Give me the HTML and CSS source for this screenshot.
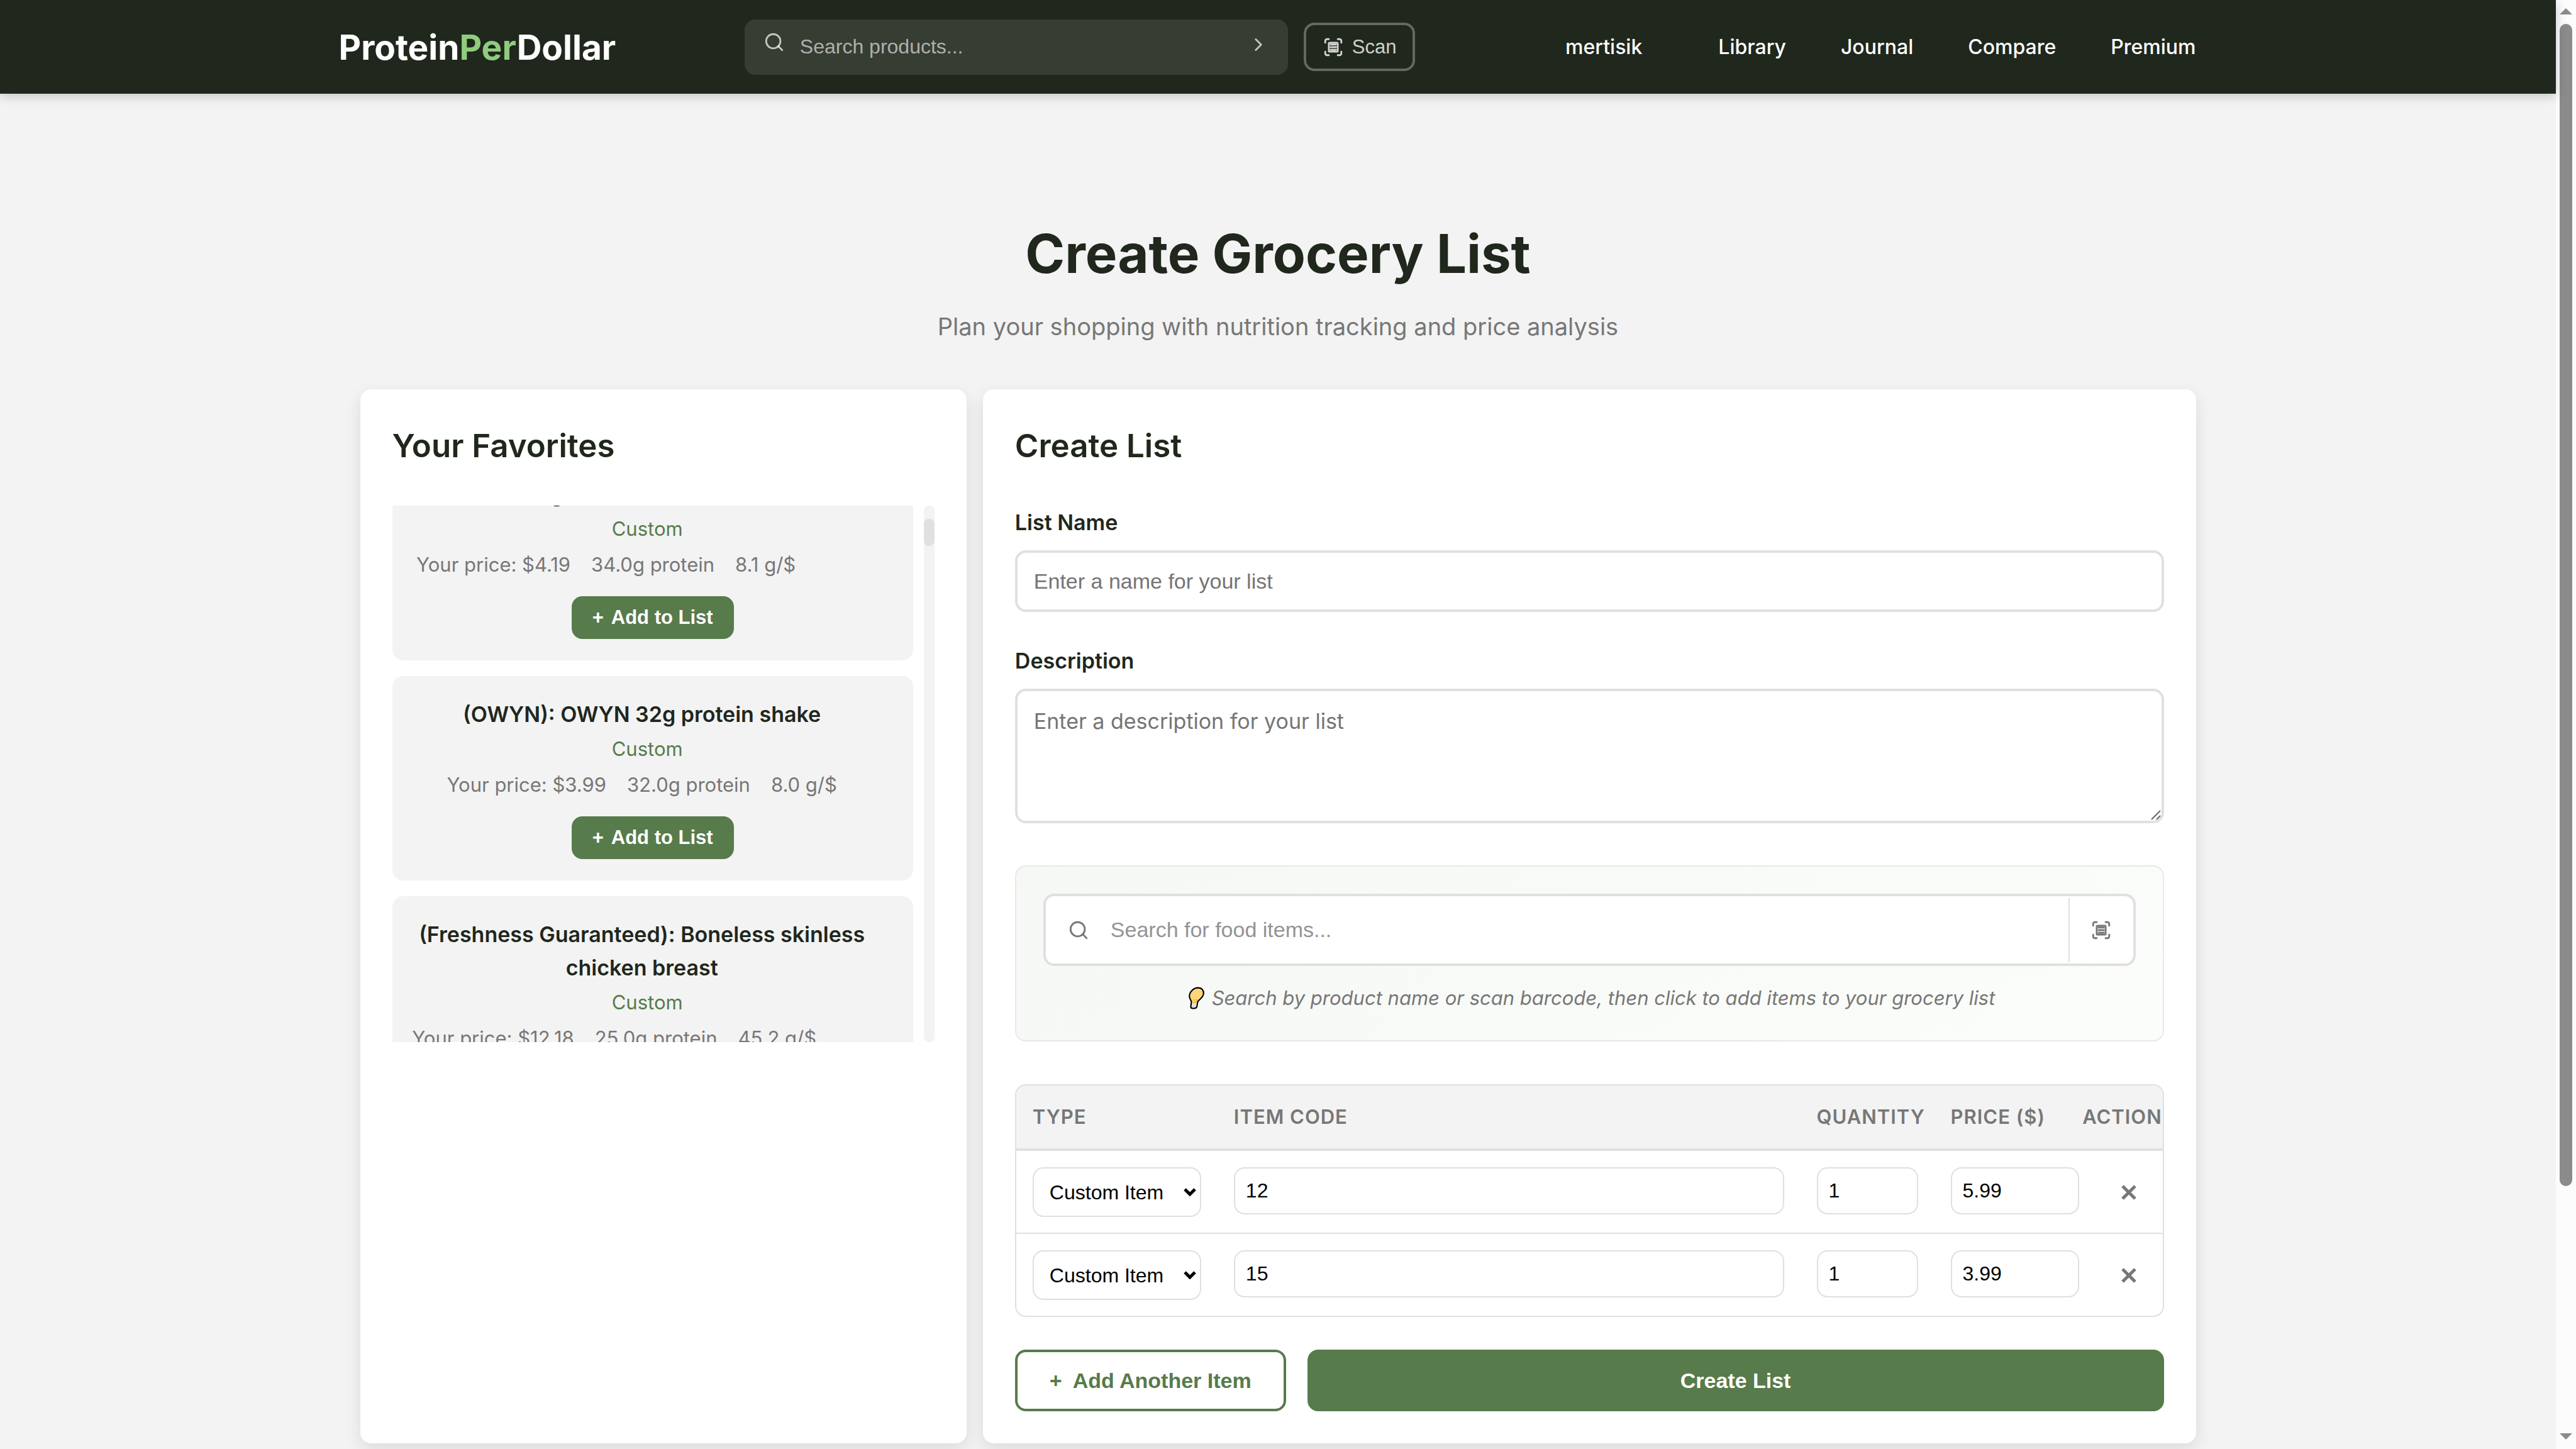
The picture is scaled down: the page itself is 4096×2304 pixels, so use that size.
FILE: index.html
```html
<!DOCTYPE html>
<html lang="en">
<head>
<meta charset="utf-8">
<title>Create Grocery List - ProteinPerDollar</title>
<link rel="stylesheet" href="styles.css">
</head>
<body>
<svg class="sprite" aria-hidden="true">
  <symbol id="icon-search" viewBox="0 0 24 24"><circle cx="11" cy="11" r="8"/><path d="M21 21l-4.35-4.35"/></symbol>
  <symbol id="icon-chevron" viewBox="0 0 24 24"><path d="M9 18l6-6-6-6"/></symbol>
  <symbol id="icon-scan" viewBox="0 0 24 24"><path d="M3 7V5a2 2 0 0 1 2-2h2M17 3h2a2 2 0 0 1 2 2v2M21 17v2a2 2 0 0 1-2 2h-2M7 21H5a2 2 0 0 1-2-2v-2"/><rect x="7" y="7" width="10" height="10" rx="1"/><path d="M9 9h6M9 12h6M9 15h6"/></symbol>
  <symbol id="icon-remove" viewBox="0 0 24 24"><path d="M2 2l20 20M22 2L2 22"/></symbol>
</svg>
<div class="window">
  <div class="page">
    <header class="site-header">
      <div class="header-inner">
        <a class="logo" href="#">Protein<span class="logo-accent">Per</span>Dollar</a>
        <form class="site-search">
          <div class="search-field">
            <svg class="icon search-glyph"><use href="#icon-search"/></svg>
            <input class="search-input" type="text" placeholder="Search products..." aria-label="Search products">
            <button class="search-go" type="button" aria-label="Search"><svg class="icon"><use href="#icon-chevron"/></svg></button>
          </div>
          <button class="scan-button" type="button"><svg class="icon"><use href="#icon-scan"/></svg>Scan</button>
        </form>
        <nav class="site-nav">
          <a class="nav-link nav-user" href="#">mertisik</a>
          <a class="nav-link" href="#">Library</a>
          <a class="nav-link" href="#">Journal</a>
          <a class="nav-link" href="#">Compare</a>
          <a class="nav-link" href="#">Premium</a>
        </nav>
      </div>
    </header>

    <main class="content">
      <h1 class="page-title">Create Grocery List</h1>
      <p class="page-subtitle">Plan your shopping with nutrition tracking and price analysis</p>

      <div class="columns">
        <section class="card">
          <h2 class="card-title">Your Favorites</h2>
          <div class="favorites">
            <div class="favorites-view">
              <div class="favorites-list">
                <article class="favorite">
                  <h3 class="favorite-name">34g chocolate milk mix</h3>
                  <p class="favorite-source">Custom</p>
                  <p class="favorite-stats stats-narrow"><span>Your price: $4.19</span><span>34.0g protein</span><span>8.1 g/$</span></p>
                  <button class="add-button" type="button"><span>+</span><span>Add to List</span></button>
                </article>
                <article class="favorite">
                  <h3 class="favorite-name">(OWYN): OWYN 32g protein shake</h3>
                  <p class="favorite-source">Custom</p>
                  <p class="favorite-stats"><span>Your price: $3.99</span><span>32.0g protein</span><span>8.0 g/$</span></p>
                  <button class="add-button" type="button"><span>+</span><span>Add to List</span></button>
                </article>
                <article class="favorite">
                  <h3 class="favorite-name">(Freshness Guaranteed): Boneless skinless chicken breast</h3>
                  <p class="favorite-source">Custom</p>
                  <p class="favorite-stats stats-medium"><span>Your price: $12.18</span><span>25.0g protein</span><span>45.2 g/$</span></p>
                  <button class="add-button" type="button"><span>+</span><span>Add to List</span></button>
                </article>
              </div>
            </div>
            <div class="favorites-track"><div class="favorites-thumb"></div></div>
          </div>
        </section>

        <section class="card">
          <h2 class="card-title">Create List</h2>
          <form class="list-form">
            <div class="field">
              <label class="field-label" for="list-name">List Name</label>
              <input class="text-input" id="list-name" type="text" placeholder="Enter a name for your list">
            </div>
            <div class="field">
              <label class="field-label" for="list-description">Description</label>
              <div class="textarea-wrap">
                <textarea class="text-area" id="list-description" placeholder="Enter a description for your list"></textarea>
                <svg class="resize-grip" viewBox="0 0 16 16"><path d="M1 15L15 1M9 15l6-6"/></svg>
              </div>
            </div>

            <div class="finder">
              <div class="finder-box">
                <svg class="icon finder-glyph"><use href="#icon-search"/></svg>
                <input class="finder-input" type="text" placeholder="Search for food items..." aria-label="Search for food items">
                <button class="finder-scan" type="button" aria-label="Scan barcode"><svg class="icon"><use href="#icon-scan"/></svg></button>
              </div>
              <p class="finder-tip"><svg class="bulb" viewBox="24 60 200 212"><path d="M152 75C184 75 202 96 201 124C199 162 162 178 149 198L142 238Q140 258 112 258Q90 260 87 246L93 200C92 188 75 172 75 150C75 112 110 76 152 75Z" fill="#ffd57a" stroke="#000" stroke-width="12" stroke-linejoin="round"/><path d="M100 209H140L133 243Q112 254 94 244Z" fill="#d4d4d8"/><path d="M98 220L134 222M96 232L132 235" stroke="#f3f3f3" stroke-width="6" fill="none"/><path d="M114 209L118 182M131 209L137 182M110 180L118 184L127 180L138 184L145 178" stroke="#fcb900" stroke-width="7" stroke-linecap="round" fill="none"/></svg> Search by product name or scan barcode, then click to add items to your grocery list</p>
            </div>

            <div class="table-frame">
              <table class="items">
                <colgroup><col class="col-type"><col><col class="col-quantity"><col class="col-price"><col class="col-action"></colgroup>
                <thead>
                  <tr><th scope="col">TYPE</th><th scope="col">ITEM CODE</th><th scope="col">QUANTITY</th><th scope="col">PRICE ($)</th><th scope="col"><div class="action-cell">ACTIONS</div></th></tr>
                </thead>
                <tbody>
                  <tr>
                    <td><div class="select-wrap"><select class="cell-select" aria-label="Type"><option>Custom Item</option></select><svg class="select-arrow" viewBox="0 0 20 13"><path d="M2 2l8 8 8-8"/></svg></div></td>
                    <td><input class="cell-input" type="text" value="12" aria-label="Item code"></td>
                    <td><input class="cell-input" type="text" value="1" aria-label="Quantity"></td>
                    <td><input class="cell-input" type="text" value="5.99" aria-label="Price"></td>
                    <td><div class="action-cell"><button class="remove-button" type="button" aria-label="Remove item"><svg class="remove-icon"><use href="#icon-remove"/></svg></button></div></td>
                  </tr>
                  <tr>
                    <td><div class="select-wrap"><select class="cell-select" aria-label="Type"><option>Custom Item</option></select><svg class="select-arrow" viewBox="0 0 20 13"><path d="M2 2l8 8 8-8"/></svg></div></td>
                    <td><input class="cell-input" type="text" value="15" aria-label="Item code"></td>
                    <td><input class="cell-input" type="text" value="1" aria-label="Quantity"></td>
                    <td><input class="cell-input" type="text" value="3.99" aria-label="Price"></td>
                    <td><div class="action-cell"><button class="remove-button" type="button" aria-label="Remove item"><svg class="remove-icon"><use href="#icon-remove"/></svg></button></div></td>
                  </tr>
                </tbody>
              </table>
            </div>

            <div class="form-actions">
              <button class="action-button action-outline" type="button"><span>+</span><span>Add Another Item</span></button>
              <button class="action-button action-primary" type="submit">Create List</button>
            </div>
          </form>
        </section>
      </div>
    </main>
  </div>

  <div class="window-scroll" aria-hidden="true">
    <svg class="scroll-arrow" viewBox="0 0 20 10"><path d="M10 0l10 10H0z"/></svg>
    <div class="scroll-track"><div class="scroll-thumb"></div></div>
    <svg class="scroll-arrow" viewBox="0 0 20 10"><path d="M0 0h20L10 10z"/></svg>
  </div>
</div>
</body>
</html>
```
FILE: styles.css
```css
:root {
  --ink: #20271c;
  --green: #577b4b;
  --grey: #777;
  --line: #e0e0e0;
  --surface: #f3f3f3;
  --ui: "Liberation Sans", Arial, sans-serif;
  --text: Inter, "Noto Sans", sans-serif;
}

*, *::before, *::after { box-sizing: border-box; }

body {
  margin: 0;
  background: var(--surface);
  color: var(--ink);
  font-family: var(--text);
  font-size: 34px;
}

h1, h2, h3, p { margin: 0; }
button, input, select, textarea { margin: 0; font-family: var(--ui); }
button { border: 0; background: none; padding: 0; cursor: pointer; }
a { color: inherit; text-decoration: none; }

.sprite { display: none; }

.icon {
  flex: none;
  display: block;
  width: 34px;
  height: 34px;
  fill: none;
  stroke: currentColor;
  stroke-width: 2;
  stroke-linecap: round;
  stroke-linejoin: round;
}

.window { display: flex; height: 100vh; overflow: hidden; }
.page { flex: 1; min-width: 0; }

/* Header */
.site-header {
  position: relative;
  background: var(--ink);
  color: #fff;
  box-shadow: 0 4px 17px rgba(0, 0, 0, .2);
}

.header-inner {
  display: flex;
  align-items: center;
  justify-content: space-between;
  max-width: 2987px;
  min-height: 149px;
  margin: 0 auto;
}

.logo { font-size: 55px; font-weight: 700; line-height: 68px; }
.logo-accent { color: #8fcc7d; }

.site-search { display: flex; align-items: center; gap: 25px; }

.search-field {
  display: flex;
  align-items: center;
  width: 864px;
  height: 88px;
  padding: 0 30px;
  border-radius: 17px;
  background: rgba(255, 255, 255, .1);
  color: rgba(255, 255, 255, .7);
}

.search-glyph { margin-bottom: 16px; }

.search-input {
  flex: 1;
  min-width: 0;
  padding: 0 24px;
  border: 0;
  background: none;
  color: #fff;
  font-size: 32px;
}
.search-input::placeholder { color: rgba(255, 255, 255, .6); }

.search-go { margin-bottom: 7px; color: inherit; }

.scan-button {
  display: flex;
  align-items: center;
  gap: 13px;
  height: 77px;
  padding: 0 26px;
  border: 4px solid rgba(255, 255, 255, .3);
  border-radius: 17px;
  color: rgba(255, 255, 255, .8);
  font-size: 31px;
}

.site-nav { display: flex; gap: 19px; }
.nav-link { padding: 17px 34px; font-size: 32px; font-weight: 500; line-height: 40px; }
.nav-user { margin-right: 34px; }

/* Page heading */
.content { max-width: 2987px; margin: 0 auto; padding: 204px 34px 68px; }
.page-title { font-size: 85px; font-weight: 700; line-height: 102px; text-align: center; }
.page-subtitle { margin-top: 34px; color: var(--grey); font-size: 38px; line-height: 60px; text-align: center; }

.columns {
  display: grid;
  grid-template-columns: minmax(0, 1fr) minmax(0, 2fr);
  gap: 26px;
  margin-top: 70px;
}

.card {
  padding: 51px;
  border-radius: 17px;
  background: #fff;
  box-shadow: 0 9px 26px rgba(0, 0, 0, .1);
}
.card-title { margin-bottom: 56px; font-size: 51px; font-weight: 600; line-height: 78px; }

/* Favorites */
.favorites { display: flex; gap: 17px; height: 853px; }
.favorites-view { flex: 1; min-width: 0; overflow: hidden; }
.favorites-list { display: flex; flex-direction: column; gap: 25px; margin-top: -79px; }

.favorites-track { width: 17px; padding-top: 21px; border-radius: 8px; background: var(--surface); }
.favorites-thumb { height: 43px; border-radius: 8px; background: var(--line); }

.favorite {
  display: flex;
  flex-direction: column;
  align-items: center;
  padding: 34px;
  border-radius: 17px;
  background: var(--surface);
  text-align: center;
}
.favorite-name { margin-right: 34px; font-size: 34px; font-weight: 600; line-height: 53px; }
.favorite-source { margin: 4px 17px 0 0; color: var(--green); font-size: 31px; line-height: 49px; }
.favorite-stats {
  display: flex;
  gap: 33px;
  margin: 8px 34px 0 0;
  color: var(--grey);
  font-size: 31px;
  line-height: 49px;
  white-space: nowrap;
}
.stats-narrow { margin-right: 148px; }
.stats-medium { margin-right: 122px; }

.add-button {
  display: flex;
  align-items: center;
  gap: 12px;
  height: 68px;
  margin-top: 26px;
  padding: 0 33px;
  border-radius: 17px;
  background: var(--green);
  color: #fff;
  font-size: 31px;
  font-weight: 600;
}

/* Form */
.field { margin-bottom: 51px; }
.field-label { display: block; margin-bottom: 17px; font-size: 34px; font-weight: 600; line-height: 54px; }

.text-input, .text-area {
  display: block;
  width: 100%;
  border: 4px solid var(--line);
  border-radius: 17px;
  background: #fff;
  font-size: 34px;
}
.text-input { height: 98px; padding: 0 26px; }
.text-area {
  height: 214px;
  padding: 26px;
  font-family: var(--text);
  line-height: 44px;
  resize: none;
}
.text-input::placeholder, .text-area::placeholder { color: #757575; }

.textarea-wrap { position: relative; }
.resize-grip {
  position: absolute;
  right: 5px;
  bottom: 5px;
  width: 16px;
  height: 16px;
  fill: none;
  stroke: #666;
  stroke-width: 2;
}

.finder {
  margin-top: 67px;
  padding: 43px;
  border: 2px solid #e6ebe4;
  border-radius: 17px;
  background: linear-gradient(135deg, #f6f8f5, #fbfdfa);
}
.finder-box {
  display: flex;
  align-items: center;
  height: 115px;
  border: 4px solid var(--line);
  border-radius: 17px;
  background: #fff;
  color: var(--grey);
}
.finder-glyph { margin-left: 35px; }
.finder-input { flex: 1; min-width: 0; padding: 0 34px; border: 0; background: none; font-size: 34px; }
.finder-input::placeholder { color: #949494; }
.finder-scan {
  display: flex;
  align-items: center;
  justify-content: center;
  width: 103px;
  height: 102px;
  border-left: 2px solid var(--line);
  color: var(--grey);
}
.finder-tip {
  margin-top: 26px;
  color: var(--grey);
  font-size: 31px;
  font-style: italic;
  line-height: 49px;
  text-align: center;
}
.bulb { width: 36px; height: 38px; margin: -8px 0; vertical-align: baseline; }

/* Item table */
.table-frame {
  margin-top: 68px;
  overflow: hidden;
  border: 2px solid var(--line);
  border-radius: 17px;
}
.items { width: 100%; border-collapse: separate; border-spacing: 0; table-layout: fixed; }
.col-type { width: 320px; }
.col-quantity { width: 213px; }
.col-price { width: 256px; }
.col-action { width: 107px; }

.items th {
  height: 104px;
  padding: 0 26px;
  border-bottom: 4px solid var(--line);
  background: var(--surface);
  color: var(--grey);
  font-size: 31px;
  font-weight: 600;
  letter-spacing: 1px;
  line-height: 48px;
  text-align: left;
  white-space: nowrap;
}
.items td { padding: 26px 26px 25px; vertical-align: top; }
.items tr:not(:last-child) td { border-bottom: 2px solid var(--line); }

.cell-input, .cell-select {
  display: block;
  width: 100%;
  height: 75px;
  padding: 0 17px;
  border: 2px solid var(--line);
  border-radius: 17px;
  background: #fff;
  color: #000;
  font-size: 32px;
}
.cell-select { height: 79px; padding: 0 25px; appearance: none; }

.select-wrap { position: relative; }
.select-arrow {
  position: absolute;
  top: 33px;
  right: 8px;
  width: 20px;
  height: 13px;
  fill: none;
  stroke: #000;
  stroke-width: 5;
  pointer-events: none;
}

.action-cell { display: flex; justify-content: center; }
.remove-button { display: flex; align-items: center; height: 79px; color: var(--grey); }
.remove-icon { width: 24px; height: 24px; fill: none; stroke: currentColor; stroke-width: 5; }

.form-actions { display: flex; gap: 34px; margin-top: 52px; }
.action-button {
  display: flex;
  align-items: center;
  justify-content: center;
  gap: 17px;
  height: 98px;
  padding: 0 51px;
  border: 4px solid var(--green);
  border-radius: 17px;
  font-size: 34px;
  font-weight: 600;
}
.action-outline { background: #fff; color: var(--green); }
.action-primary { flex: 1; background: var(--green); color: #fff; }

/* Window scroll bar */
.window-scroll {
  display: flex;
  flex-direction: column;
  align-items: center;
  width: 32px;
  padding: 13px 0 15px;
  background: #fcfcfc;
}
.scroll-arrow { flex: none; width: 20px; height: 10px; fill: #8b8b8b; }
.scroll-track { flex: 1; width: 20px; padding: 15px 0; }
.scroll-thumb { height: 83%; border-radius: 10px; background: #8b8b8b; }
```
